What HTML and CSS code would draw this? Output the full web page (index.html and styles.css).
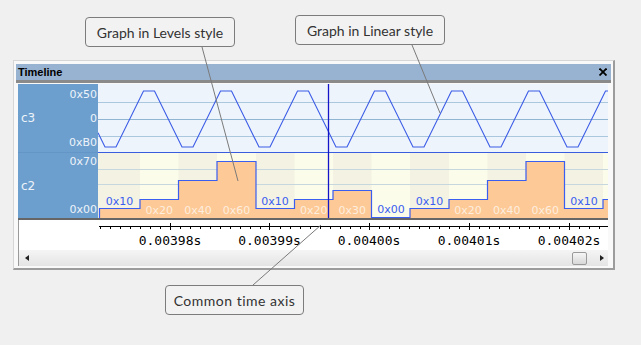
FILE: index.html
```html
<!DOCTYPE html>
<html lang="en">
<head>
    <meta charset="UTF-8">
    <title>Timeline</title>
    <link rel="stylesheet" href="styles.css">
</head>
<body>
    <div class="page">
        <div class="callouts">
            <div class="callout levels">Graph in Levels style</div>
            <div class="callout linear">Graph in Linear style</div>
        </div>

        <div class="window">
            <div class="titlebar">
                <span class="title">Timeline</span>
                <svg class="close" width="8" height="8" viewBox="0 0 8 8">
                    <line x1="0.5" y1="0.5" x2="7.5" y2="7.5"/>
                    <line x1="7.5" y1="0.5" x2="0.5" y2="7.5"/>
                </svg>
            </div>

            <div class="pane">
                <div class="channels">
                    <div class="labels">
                        <div class="ch c3">
                            <span class="name">c3</span>
                            <div class="scale"><span>0x50</span><span>0</span><span>0xB0</span></div>
                        </div>
                        <div class="ch c2">
                            <span class="name">c2</span>
                            <div class="scale"><span>0x70</span><span>0x00</span></div>
                        </div>
                    </div>

                    <svg class="plot" width="510" height="134" viewBox="0 0 510 134">
                        <!-- c3: linear -->
                        <rect class="bg-c3" x="0" y="0" width="510" height="68"/>
                        <line class="grid-c3" x1="0" y1="18.5" x2="510" y2="18.5"/>
                        <line class="grid-c3 mid" x1="0" y1="35.5" x2="510" y2="35.5"/>
                        <line class="grid-c3" x1="0" y1="52.5" x2="510" y2="52.5"/>
                        <polyline class="wave" points="0,48.7 7,63 18,63 45.5,7 56.5,7 84,63 95,63 122.5,7 133.5,7 161,63 172,63 199.5,7 210.5,7 238,63 249,63 276.5,7 287.5,7 315,63 326,63 353.5,7 364.5,7 392,63 403,63 430.5,7 441.5,7 469,63 480,63 507.5,7 510,7"/>
                        <line class="sep" x1="0" y1="68.5" x2="510" y2="68.5"/>

                        <!-- c2: levels -->
                        <rect class="bg-c2" x="0" y="69" width="510" height="65"/>
                        <rect class="stripe" x="42" y="69" width="38.5" height="65"/>
                        <rect class="stripe" x="119" y="69" width="39" height="65"/>
                        <rect class="stripe" x="196.5" y="69" width="38.5" height="65"/>
                        <rect class="stripe" x="273.5" y="69" width="38.5" height="65"/>
                        <rect class="stripe" x="351" y="69" width="38.5" height="65"/>
                        <rect class="stripe" x="428" y="69" width="38.5" height="65"/>
                        <rect class="stripe" x="505" y="69" width="5" height="65"/>
                        <line class="grid-c2" x1="0" y1="85.5" x2="510" y2="85.5"/>
                        <line class="grid-c2" x1="0" y1="100.5" x2="510" y2="100.5"/>
                        <path class="level-fill" d="M1.5,134 V124.5 H42 V115.5 H80.5 V96.5 H119 V77.5 H158 V124.5 H196.5 V115.5 H235 V106.5 H273.5 V133.5 H312 V124.5 H351 V115.5 H389.5 V96.5 H428 V77.5 H466.5 V124.5 H505 V115.5 H510 V134 Z"/>
                        <path class="step" d="M1.5,134 V124.5 H42 V115.5 H80.5 V96.5 H119 V77.5 H158 V124.5 H196.5 V115.5 H235 V106.5 H273.5 V133.5 H312 V124.5 H351 V115.5 H389.5 V96.5 H428 V77.5 H466.5 V124.5 H505 V115.5 H510"/>

                        <text class="val out" x="21.5" y="120.7">0x10</text>
                        <text class="val in" x="61.3" y="130">0x20</text>
                        <text class="val in" x="99.9" y="130">0x40</text>
                        <text class="val in" x="138.5" y="130">0x60</text>
                        <text class="val out" x="177.1" y="120.7">0x10</text>
                        <text class="val in" x="215.7" y="130">0x20</text>
                        <text class="val in" x="254.3" y="130">0x30</text>
                        <text class="val out" x="292.9" y="129">0x00</text>
                        <text class="val out" x="331.5" y="120.7">0x10</text>
                        <text class="val in" x="370.1" y="130">0x20</text>
                        <text class="val in" x="408.7" y="130">0x40</text>
                        <text class="val in" x="447.3" y="130">0x60</text>
                        <text class="val out" x="485.9" y="120.7">0x10</text>

                        <line class="cursor" x1="230.5" y1="0" x2="230.5" y2="134"/>
                    </svg>
                </div>

                <div class="axis">
                    <div class="axis-gutter"></div>
                    <svg class="ruler" width="510" height="30" viewBox="0 0 510 30">
                        <line class="axis-line" x1="1" y1="6.5" x2="510" y2="6.5"/>
                        <path class="tick" d="M2.5,6 v3 M12.5,6 v3 M22.5,6 v3 M32.5,6 v3 M42.5,6 v3 M52.5,6 v3 M62.5,6 v3 M82.5,6 v3 M92.5,6 v3 M102.5,6 v3 M112.5,6 v3 M122.5,6 v3 M132.5,6 v3 M142.5,6 v3 M152.5,6 v3 M162.5,6 v3 M182.5,6 v3 M192.5,6 v3 M202.5,6 v3 M212.5,6 v3 M222.5,6 v3 M232.5,6 v3 M242.5,6 v3 M252.5,6 v3 M262.5,6 v3 M281.5,6 v3 M291.5,6 v3 M301.5,6 v3 M311.5,6 v3 M321.5,6 v3 M331.5,6 v3 M341.5,6 v3 M351.5,6 v3 M361.5,6 v3 M381.5,6 v3 M391.5,6 v3 M401.5,6 v3 M411.5,6 v3 M421.5,6 v3 M431.5,6 v3 M441.5,6 v3 M451.5,6 v3 M461.5,6 v3 M481.5,6 v3 M491.5,6 v3 M501.5,6 v3"/>
                        <path class="tick major" d="M72.5,3 v7 M171.5,3 v7 M271.5,3 v7 M371.5,3 v7 M471.5,3 v7"/>
                        <text class="tick-label" x="72" y="25">0.00398s</text>
                        <text class="tick-label" x="171.5" y="25">0.00399s</text>
                        <text class="tick-label" x="271" y="25">0.00400s</text>
                        <text class="tick-label" x="371" y="25">0.00401s</text>
                        <text class="tick-label" x="471" y="25">0.00402s</text>
                    </svg>
                </div>

                <div class="scrollbar">
                    <span class="arrow left"></span>
                    <span class="thumb"></span>
                    <span class="arrow right"></span>
                </div>
            </div>
        </div>

        <div class="callout common">Common time axis</div>

        <svg class="leaders" width="641" height="345" viewBox="0 0 641 345">
            <line x1="202" y1="47" x2="238" y2="181"/>
            <line x1="412" y1="45" x2="440" y2="113"/>
            <line x1="253" y1="285" x2="321" y2="225"/>
        </svg>
    </div>
</body>
</html>
```

FILE: styles.css
```css
body {
    margin: 0;
    background: #f0f0f0;
    font-family: "DejaVu Sans", Verdana, sans-serif;
}

.page {
    position: relative;
    width: 641px;
    height: 345px;
    overflow: hidden;
}

/* callouts */
.callouts {
    display: flex;
    align-items: flex-start;
    height: 60px;
}

.callout {
    box-sizing: border-box;
    height: 30px;
    display: flex;
    align-items: center;
    justify-content: center;
    border: 1px solid #7c7c7c;
    border-radius: 4px;
    background: #f2f2f2;
    font-family: Lato, "Open Sans", sans-serif;
    font-size: 14px;
    color: #333;
}

.callout.levels {
    width: 150px;
    margin: 17px 0 0 85px;
}

.callout.linear {
    width: 150px;
    margin: 15px 0 0 60px;
}

.callout.common {
    width: 139px;
    margin: 15px 0 0 165px;
    letter-spacing: 0.5px;
}

.leaders {
    position: absolute;
    left: 0;
    top: 0;
    pointer-events: none;
}

.leaders line {
    stroke: #7a7a7a;
    stroke-width: 1;
}

/* window */
.window {
    box-sizing: border-box;
    width: 602px;
    margin-left: 13px;
    padding: 3px 2px 2px 2px;
    background: #f9f9f9;
    border: 1px solid #d6d6d6;
    border-right: 2px solid #9c9c9c;
    border-bottom: 2px solid #9c9c9c;
}

.titlebar {
    height: 16px;
    padding: 0 4px 0 2px;
    display: flex;
    align-items: center;
    justify-content: space-between;
    background: #98b3d1;
    border-bottom: 3px solid #8a8a8a;
}

.titlebar .title {
    font-family: "Liberation Sans", Arial, sans-serif;
    font-size: 11px;
    font-weight: bold;
    color: #000;
}

.close line {
    stroke: #000;
    stroke-width: 1.8;
}

.pane {
    margin: 1px 3px 0 2px;
    background: #fff;
}

.channels {
    display: flex;
    height: 134px;
}

.labels {
    width: 80px;
    display: flex;
    flex-direction: column;
    background: #6c9fcd;
    color: #eef3fa;
    font-size: 11px;
}

.ch {
    display: flex;
    box-sizing: border-box;
}

.ch.c3 {
    height: 69px;
    border-bottom: 1px solid #6396c6;
}

.ch.c2 {
    height: 65px;
}

.ch .name {
    align-self: center;
    padding-left: 3px;
    font-size: 12px;
}

.ch .scale {
    flex: 1;
    display: flex;
    flex-direction: column;
    justify-content: space-between;
    align-items: flex-end;
    padding-right: 1px;
    line-height: 13px;
}

.c3 .scale {
    padding-top: 4px;
    padding-bottom: 3px;
}

.c2 .scale {
    padding-top: 2px;
    padding-bottom: 2px;
}

/* plot */
.bg-c3 { fill: #eef4fc; }
.grid-c3 { stroke: #aac7de; stroke-width: 1; }
.grid-c3.mid { stroke: #8fb5d2; }
.sep { stroke: #3a5de0; stroke-width: 1; }

.wave {
    fill: none;
    stroke: #3b5ce6;
    stroke-width: 1.1;
}

.bg-c2 { fill: #f3f2e3; }
.stripe { fill: #fcfcea; }
.grid-c2 { stroke: #c6d7de; stroke-width: 1; }
.level-fill { fill: #fdc996; }

.step {
    fill: none;
    stroke: #3a5ef0;
    stroke-width: 1.2;
}

.val {
    font-family: "DejaVu Sans", Verdana, sans-serif;
    font-size: 11px;
    text-anchor: middle;
}

.val.in { fill: #fdeedf; }
.val.out { fill: #3a5ef0; }

.cursor {
    stroke: #1414c8;
    stroke-width: 1.3;
}

/* time axis */
.axis {
    display: flex;
    height: 30px;
    border-top: 2px solid #666;
    background: #fff;
}

.axis-gutter {
    width: 80px;
    box-sizing: border-box;
    border-left: 1px solid #9a9a9a;
}

.axis-line,
.tick {
    stroke: #000;
    stroke-width: 1;
    fill: none;
}

.tick-label {
    font-family: "DejaVu Sans Mono", "Liberation Mono", monospace;
    font-size: 13px;
    text-anchor: middle;
    fill: #000;
}

/* scrollbar */
.scrollbar {
    box-sizing: border-box;
    height: 16px;
    display: flex;
    align-items: center;
    padding: 0 4px 0 6px;
    background: linear-gradient(#f5f5f5, #e4e4e4);
    border-left: 1px solid #9a9a9a;
}

.arrow {
    width: 0;
    height: 0;
    border-top: 3px solid transparent;
    border-bottom: 3px solid transparent;
}

.arrow.left {
    border-right: 4px solid #222;
}

.arrow.right {
    border-left: 4px solid #222;
}

.thumb {
    box-sizing: border-box;
    width: 15px;
    height: 13px;
    margin-left: auto;
    margin-right: 13px;
    border: 1px solid #9a9a9a;
    border-radius: 2px;
    background: linear-gradient(#f6f6f6, #d8d8d8);
}
```
